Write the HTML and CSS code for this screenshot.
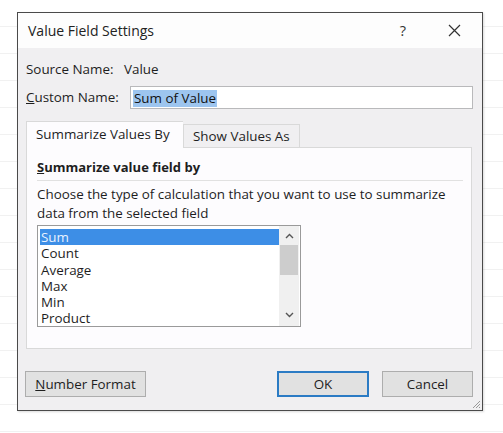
FILE: index.html
```html
<!DOCTYPE html>
<html>
<head>
<meta charset="utf-8">
<link rel="stylesheet" href="styles.css">
</head>
<body>
<div class="dialog">
  <div class="titlebar">
    <span class="title">Value Field Settings</span>
    <span class="help">?</span>
    <svg class="close" width="13" height="13" viewBox="0 0 13 13"><path d="M1 1L12 12M12 1L1 12" stroke="#333" stroke-width="1.2" fill="none"/></svg>
  </div>
  <div class="body">
    <div class="row source">
      <span class="label">Source Name:</span>
      <span class="value">Value</span>
    </div>
    <div class="row custom">
      <span class="label"><u>C</u>ustom Name:</span>
      <div class="input"><span class="sel">Sum of Value</span></div>
    </div>
    <div class="tabs">
      <div class="tab active">Summarize Values By</div>
      <div class="tab">Show Values As</div>
    </div>
    <div class="panel">
      <div class="heading"><u>S</u>ummarize value field by</div>
      <div class="sep"></div>
      <p class="desc">Choose the type of calculation that you want to use to summarize data from the selected field</p>
      <div class="listbox">
        <ul class="items">
          <li class="selected">Sum</li>
          <li>Count</li>
          <li>Average</li>
          <li>Max</li>
          <li>Min</li>
          <li>Product</li>
        </ul>
        <div class="scrollbar">
          <svg class="arrow" width="9" height="6" viewBox="0 0 9 6"><path d="M1 5L4.5 1.5L8 5" stroke="#555" stroke-width="1.4" fill="none"/></svg>
          <div class="track"><div class="thumb"></div></div>
          <svg class="arrow" width="9" height="6" viewBox="0 0 9 6"><path d="M1 1L4.5 4.5L8 1" stroke="#555" stroke-width="1.4" fill="none"/></svg>
        </div>
      </div>
    </div>
    <div class="buttons">
      <button class="btn numfmt"><u>N</u>umber Format</button>
      <div class="spacer"></div>
      <button class="btn ok">OK</button>
      <button class="btn cancel">Cancel</button>
    </div>
  </div>
  <svg class="grip" width="10" height="10" viewBox="0 0 10 10"><path d="M9 2L2 9M9 5L5 9M9 8L8 9" stroke="#999" stroke-width="1" fill="none"/></svg>
</div>
</body>
</html>
```
FILE: styles.css
```css
* { box-sizing: border-box; }
html, body { margin: 0; padding: 0; }
body {
  width: 503px;
  height: 433px;
  background-color: #fff;
  background-image: repeating-linear-gradient(to bottom, transparent 0, transparent 26px, #f1f1f1 26px, #f1f1f1 27px);
  font-family: "Open Sans", "Noto Sans", sans-serif;
  font-size: 13.4px;
  color: #1e1e1e;
  padding: 12px 0 0 17px;
  overflow: hidden;
}
.dialog {
  position: relative;
  width: 466px;
  height: 399px;
  border: 1px solid #4a4a4a;
  background: #f0eff1;
  box-shadow: 1px 1px 2px rgba(0,0,0,0.15);
  display: flex;
  flex-direction: column;
}
.titlebar {
  height: 35px;
  background: #fdfdfd;
  display: flex;
  align-items: center;
  padding: 0 21px 0 10px;
  flex-shrink: 0;
}
.title { font-size: 14px; flex: 1; color: #222; }
.help { font-size: 14.5px; margin-right: 42px; color: #333; }
.close { display: block; }
.body {
  flex: 1;
  padding: 11px 10px 0 8px;
  display: flex;
  flex-direction: column;
}
.row { display: flex; align-items: center; }
.source { height: 20px; }
.source .label { width: 98px; }
.custom { height: 24px; margin-top: 6px; }
.custom .label { width: 104px; }
.input {
  flex: 1;
  height: 23px;
  background: #fff;
  border: 1px solid #b9b9bb;
  padding: 2px 2px 0 2px;
  display: flex;
  align-items: center;
  margin-right: -1px;
}
.sel {
  background: #9dc5ef;
  color: #111;
  padding: 0 1px;
  line-height: 17px;
}
.tabs {
  display: flex;
  align-items: flex-end;
  margin-top: 11px;
  height: 27px;
  position: relative;
  z-index: 1;
}
.tab {
  border: 1px solid #d9d9d9;
  border-bottom: none;
  padding: 0 9px;
  height: 23px;
  line-height: 22px;
  background: #f0eff1;
}
.tab.active {
  background: #fdfcfe;
  height: 27px;
  line-height: 25px;
  width: 157px;
  margin-bottom: -1px;
  border-right: none;
}
.panel {
  height: 202px;
  border: 1px solid #d9d9d9;
  background: #fdfcfe;
  padding: 9px 8px 0 10px;
}
.heading { font-weight: 700; height: 20px; line-height: 20px; font-size: 13px; }
.sep { height: 1px; background: #e1e1e1; margin: 3px 0 4px 0; }
.desc { margin: 0; line-height: 19px; }
.listbox {
  margin-top: 2px;
  width: 264px;
  height: 102px;
  border: 1px solid #9a9a9a;
  background: #fff;
  display: flex;
}
.items {
  list-style: none;
  margin: 0;
  padding: 3px 0 0 2px;
  flex: 1;
}
.items li {
  height: 16.3px;
  line-height: 16px;
  padding-left: 1px;
}
.items li.selected {
  background: #3d8ee6;
  color: #e8f2ff;
}
.scrollbar {
  width: 20px;
  background: #f0f0f0;
  display: flex;
  flex-direction: column;
  align-items: center;
  padding: 3px 0 4px 0;
  margin: 0 1px 0 0;
}
.arrow { display: block; margin: 4px 0; }
.track { flex: 1; width: 100%; padding: 2px 1px; }
.thumb { width: 100%; height: 30px; background: #cdcdcd; }
.buttons {
  display: flex;
  margin-top: 22px;
  height: 26px;
}
.spacer { flex: 1; }
.btn {
  font-family: inherit;
  font-size: 13.4px;
  color: #1e1e1e;
  background: #e1e1e1;
  border: 1px solid #adadad;
  height: 26px;
  padding: 0;
}
.numfmt { width: 121px; margin-left: -1px; }
.ok { width: 92px; border: 2px solid #2b7bc4; margin-right: 13px; }
.cancel { width: 91px; margin-right: -1px; }
.grip { position: absolute; right: 1px; bottom: 1px; }
```
